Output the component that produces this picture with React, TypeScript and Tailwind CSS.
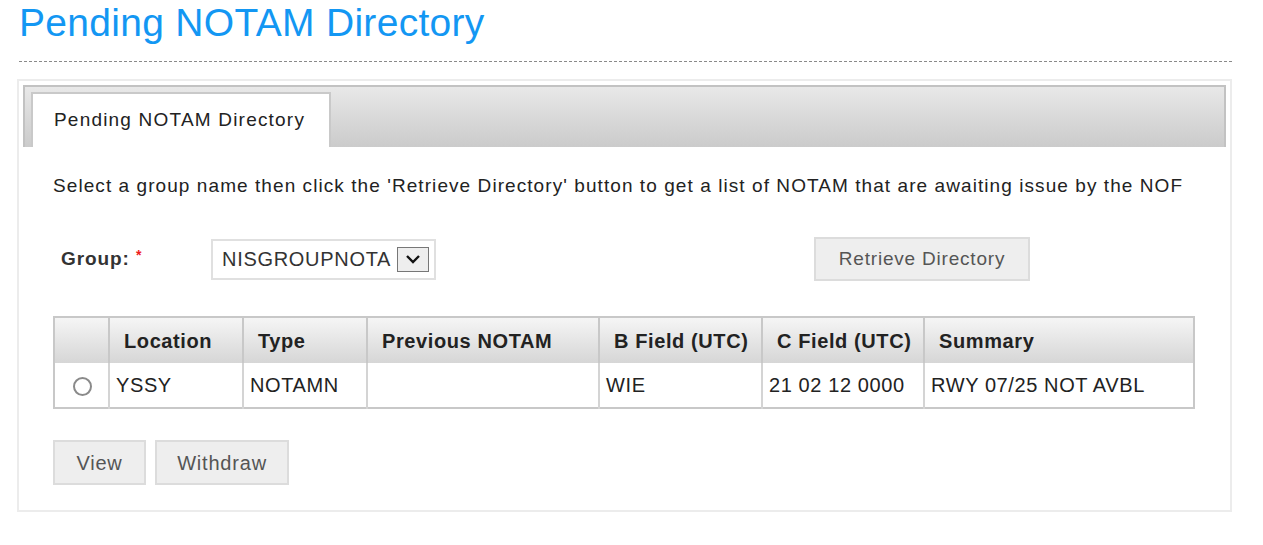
import React from 'react';

const cols = [
  { label: '', w: 'w-[55px]' },
  { label: 'Location', w: 'w-[134px]' },
  { label: 'Type', w: 'w-[124px]' },
  { label: 'Previous NOTAM', w: 'w-[232px]' },
  { label: 'B Field (UTC)', w: 'w-[163px]' },
  { label: 'C Field (UTC)', w: 'w-[162px]' },
  { label: 'Summary', w: '' },
];

const row = ['YSSY', 'NOTAMN', '', 'WIE', '21 02 12 0000', 'RWY 07/25 NOT AVBL'];

export default function App() {
  return (
    <div className="w-[1263px] h-[545px] bg-white overflow-hidden font-['Liberation_Sans',Arial,sans-serif]">
      {/* Heading */}
      <div className="pl-[19px] pr-[31px]">
        <h1 className="text-[39px] leading-[46px] text-[#1397f3] tracking-[0.3px]">Pending NOTAM Directory</h1>
        <div className="mt-[15px] border-t border-dashed border-[#8a8a8a]" />
      </div>

      {/* Panel */}
      <div className="ml-[17px] mr-[31px] mt-[17px] h-[433px] border-2 border-[#ececec] px-[4px] pt-[4px]">
        {/* Tab bar */}
        <div className="h-[62px] flex items-end pl-[6px] border-2 border-b-0 border-[#c2c2c2] bg-gradient-to-b from-[#e8e8e8] to-[#cbcbcb]">
          <div className="h-[55px] w-[300px] bg-white border-l-2 border-t-2 border-r-2 border-[#c9c9c9] flex items-center pl-[21px] text-[19px] tracking-[1.2px] text-[#222]">
            Pending NOTAM Directory
          </div>
        </div>

        <div className="pl-[30px] pr-[30px] text-[#222]">
          <p className="mt-[27px] text-[19px] tracking-[1.07px] leading-[24px] whitespace-nowrap">
            Select a group name then click the 'Retrieve Directory' button to get a list of NOTAM that are awaiting issue by the NOF
          </p>

          {/* Group row */}
          <div className="mt-[39px] flex items-center h-[44px]">
            <div className="w-[158px] pl-[8px] text-[19px] font-bold text-[#333] tracking-[0.9px]">
              Group: <span className="text-[#ee1c1c] text-[14px] align-top">*</span>
            </div>
            <div className="h-[41px] w-[225px] border-2 border-[#e0e0e0] flex items-center pl-[9px] pr-[5px]">
              <span className="text-[20px] text-[#333] flex-1 tracking-[0.7px] whitespace-nowrap">NISGROUPNOTA</span>
              <span className="w-[32px] h-[25px] border border-[#777] bg-[#eeeeee] flex items-center justify-center">
                <svg width="16" height="10" viewBox="0 0 16 10">
                  <path d="M2 2l6 6 6-6" fill="none" stroke="#111" strokeWidth="2.4" />
                </svg>
              </span>
            </div>
            <button className="ml-[378px] h-[44px] w-[216px] bg-[#eeeeee] border-2 border-[#dcdcdc] text-[19px] text-[#555] tracking-[0.8px]">
              Retrieve Directory
            </button>
          </div>

          {/* Table */}
          <table className="mt-[35px] w-[1142px] border-collapse border-2 border-[#c8c8c8] text-[20px] tracking-[0.6px]">
            <thead>
              <tr className="h-[46px] bg-gradient-to-b from-[#f6f6f6] to-[#d6d6d6]">
                {cols.map((c, i) => (
                  <th
                    key={i}
                    className={`${c.w} border-l-2 first:border-l-0 border-[#c8c8c8] text-left font-bold pl-[14px] text-[#222]`}
                  >
                    {c.label}
                  </th>
                ))}
              </tr>
            </thead>
            <tbody>
              <tr className="h-[45px] bg-white">
                <td className="border-l-0 text-center">
                  <span className="inline-block w-[19px] h-[19px] rounded-full border-2 border-[#8a8a8a] align-middle ml-[2px]" />
                </td>
                {row.map((v, i) => (
                  <td key={i} className="border-l-2 border-[#d4d4d4] pl-[6px] text-[#222] whitespace-nowrap">
                    {v}
                  </td>
                ))}
              </tr>
            </tbody>
          </table>

          {/* Actions */}
          <div className="mt-[31px] flex gap-[9px]">
            <button className="h-[45px] w-[93px] bg-[#eeeeee] border-2 border-[#dcdcdc] text-[20px] text-[#555] tracking-[0.8px]">View</button>
            <button className="h-[45px] w-[134px] bg-[#eeeeee] border-2 border-[#dcdcdc] text-[20px] text-[#555] tracking-[0.8px]">Withdraw</button>
          </div>
        </div>
      </div>
    </div>
  );
}
